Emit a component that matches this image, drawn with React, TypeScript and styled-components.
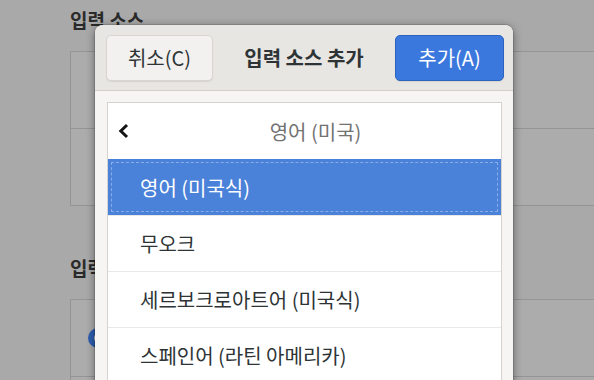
import styled, { createGlobalStyle } from 'styled-components';

const GlobalStyle = createGlobalStyle`
  html, body {
    margin: 0;
    padding: 0;
    width: 594px;
    height: 380px;
    overflow: hidden;
  }
  body {
    font-family: "Noto Sans CJK KR", "Noto Sans", sans-serif;
  }
`;

const Screen = styled.div`
  position: relative;
  width: 594px;
  height: 380px;
  overflow: hidden;
  background: #a9a9a9;
`;

// settings page dimmed behind the dialog
const Page = styled.div`
  display: flex;
  flex-direction: column;
  padding: 8px 0 0 70px;
`;

const Section = styled.section`
  display: flex;
  flex-direction: column;
  margin-bottom: 50px;
`;

const SectionTitle = styled.h2`
  margin: 0 0 20px;
  font-size: 19px;
  line-height: 23px;
  font-weight: 700;
  color: #2a2a2a;
`;

const Frame = styled.div`
  width: 600px;
  border: 1px solid #949494;
  background: #acacac;
`;

const FrameRow = styled.div`
  height: 76px;
  display: flex;
  align-items: center;
  padding-left: 17px;
  & + & {
    border-top: 1px solid #949494;
  }
`;

const Radio = styled.span`
  width: 20px;
  height: 20px;
  border-radius: 50%;
  box-sizing: border-box;
  border: 6px solid #2d5fb2;
  background: #dcdcdc;
`;

const Dialog = styled.div`
  position: absolute;
  left: 95px;
  top: 25px;
  width: 418px;
  height: 380px;
  display: flex;
  flex-direction: column;
  background: #f6f5f4;
  border-radius: 8px 8px 0 0;
  box-shadow: 0 2px 10px rgba(0, 0, 0, 0.45), 0 0 0 1px rgba(0, 0, 0, 0.12);
  overflow: hidden;
`;

const Header = styled.header`
  height: 65px;
  flex: none;
  display: grid;
  grid-template-columns: auto 1fr auto;
  align-items: center;
  padding: 0 9px 0 11px;
  background: #e8e6e3;
  border-bottom: 1px solid #d3cfcb;
`;

const Title = styled.div`
  text-align: center;
  font-size: 20px;
  font-weight: 700;
  color: #2e3436;
`;

const Button = styled.button<{ $primary?: boolean }>`
  height: 46px;
  width: ${(p) => (p.$primary ? '109px' : '107px')};
  border-radius: 5px;
  font-family: inherit;
  font-size: 20px;
  padding: 0;
  color: ${(p) => (p.$primary ? '#ffffff' : '#2e3436')};
  background: ${(p) => (p.$primary ? '#3b78dd' : '#f2f1ef')};
  border: 1px solid ${(p) => (p.$primary ? '#2b63bf' : '#d9d5d1')};
  box-shadow: 0 1px 1px rgba(0, 0, 0, 0.08);
`;

const Body = styled.div`
  flex: 1;
  padding: 11px 11px 0 12px;
`;

const List = styled.div`
  background: #ffffff;
  border: 1px solid #d6d2ce;
  display: flex;
  flex-direction: column;
`;

const ListHeader = styled.div`
  height: 56px;
  display: flex;
  align-items: center;
  padding-left: 9px;
`;

const HeaderLabel = styled.span`
  flex: 1;
  text-align: center;
  font-size: 20px;
  color: #727272;
`;

const Row = styled.div<{ $selected?: boolean }>`
  height: 55px;
  display: flex;
  align-items: center;
  padding-left: 32px;
  font-size: 20px;
  color: ${(p) => (p.$selected ? '#ffffff' : '#2e3436')};
  background: ${(p) => (p.$selected ? '#4a81d9' : 'transparent')};
  border-top: 1px solid ${(p) => (p.$selected ? '#4a81d9' : '#e8e8e8')};
  outline: ${(p) => (p.$selected ? '1px dashed rgba(255,255,255,0.35)' : 'none')};
  outline-offset: -4px;
`;

const rows = ['무오크', '세르보크로아트어 (미국식)', '스페인어 (라틴 아메리카)'];

export default function App() {
  return (
    <Screen>
      <GlobalStyle />
      <Page>
        <Section>
          <SectionTitle>입력 소스</SectionTitle>
          <Frame>
            <FrameRow />
            <FrameRow />
          </Frame>
        </Section>
        <Section>
          <SectionTitle>입력 소스 전환</SectionTitle>
          <Frame>
            <FrameRow>
              <Radio />
            </FrameRow>
            <FrameRow />
          </Frame>
        </Section>
      </Page>

      <Dialog>
        <Header>
          <Button>취소(C)</Button>
          <Title>입력 소스 추가</Title>
          <Button $primary>추가(A)</Button>
        </Header>
        <Body>
          <List>
            <ListHeader>
              <svg width="13" height="16" viewBox="0 0 13 16">
                <path d="M10 2 L3.8 8 L10 14" fill="none" stroke="#141414" strokeWidth="3" />
              </svg>
              <HeaderLabel>영어 (미국)</HeaderLabel>
            </ListHeader>
            <Row $selected>영어 (미국식)</Row>
            {rows.map((r) => (
              <Row key={r}>{r}</Row>
            ))}
          </List>
        </Body>
      </Dialog>
    </Screen>
  );
}
